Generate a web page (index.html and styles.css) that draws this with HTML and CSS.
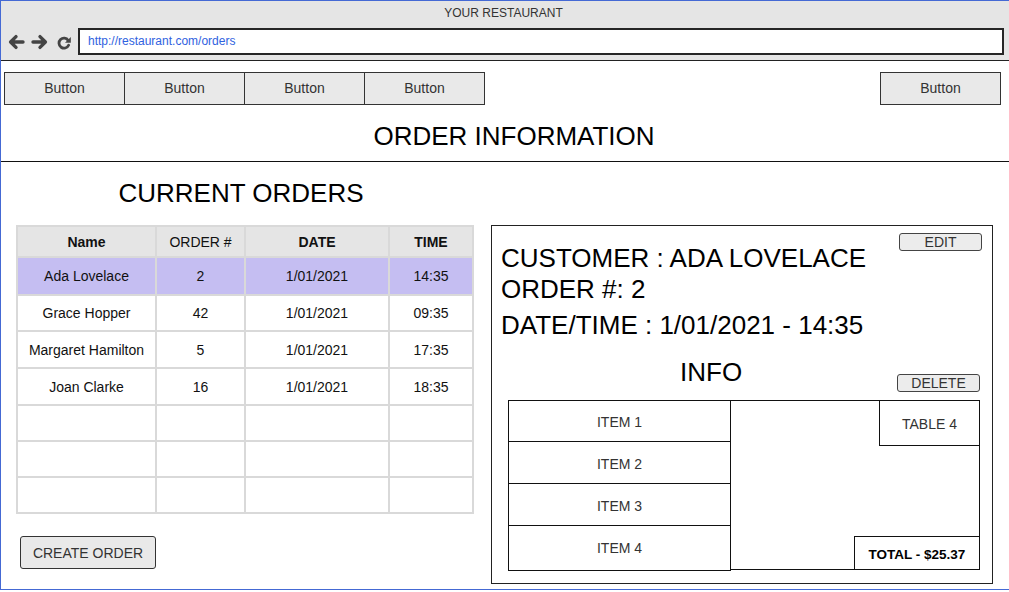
FILE: index.html
```html
<!DOCTYPE html>
<html lang="en">
<head>
<meta charset="utf-8">
<title>Order Information</title>
<link rel="stylesheet" href="styles.css">
</head>
<body>
<div class="window">
  <header class="chrome">
    <div class="chrome-title">YOUR RESTAURANT</div>
    <div class="chrome-bar">
      <div class="nav-icons">
        <svg class="icon" viewBox="0 0 18 16" aria-hidden="true">
          <path d="M16 8H4M9 2.6L3.6 8L9 13.4" fill="none" stroke="#444" stroke-width="3.4" stroke-linecap="round" stroke-linejoin="round"/>
        </svg>
        <svg class="icon" viewBox="0 0 18 16" aria-hidden="true">
          <path d="M2 8H14M9 2.6L14.4 8L9 13.4" fill="none" stroke="#444" stroke-width="3.4" stroke-linecap="round" stroke-linejoin="round"/>
        </svg>
        <svg class="icon" viewBox="0 0 18 16" aria-hidden="true">
          <path d="M13.2 6.4A5 5 0 1 0 13.6 11.2" fill="none" stroke="#444" stroke-width="2.8" stroke-linecap="round"/>
          <path d="M15.8 3V8.8H10Z" fill="#444"/>
        </svg>
      </div>
      <div class="url">http://restaurant.com/orders</div>
    </div>
  </header>

  <nav class="menu">
    <div class="menu-group">
      <button class="menu-btn">Button</button>
      <button class="menu-btn">Button</button>
      <button class="menu-btn">Button</button>
      <button class="menu-btn">Button</button>
    </div>
    <button class="menu-btn">Button</button>
  </nav>

  <h1 class="page-title">ORDER INFORMATION</h1>

  <main class="content">
    <section class="orders">
      <h2 class="orders-title">CURRENT ORDERS</h2>
      <table class="orders-table">
        <colgroup>
          <col class="c-name"><col class="c-num"><col class="c-date"><col class="c-time">
        </colgroup>
        <thead>
          <tr>
            <th class="bold">Name</th>
            <th>ORDER #</th>
            <th class="bold">DATE</th>
            <th class="bold">TIME</th>
          </tr>
        </thead>
        <tbody>
          <tr class="selected r38"><td>Ada Lovelace</td><td>2</td><td>1/01/2021</td><td>14:35</td></tr>
          <tr class="r36"><td>Grace Hopper</td><td>42</td><td>1/01/2021</td><td>09:35</td></tr>
          <tr class="r37"><td>Margaret Hamilton</td><td>5</td><td>1/01/2021</td><td>17:35</td></tr>
          <tr class="r37"><td>Joan Clarke</td><td>16</td><td>1/01/2021</td><td>18:35</td></tr>
          <tr class="r36"><td></td><td></td><td></td><td></td></tr>
          <tr class="r36"><td></td><td></td><td></td><td></td></tr>
          <tr class="r36"><td></td><td></td><td></td><td></td></tr>
        </tbody>
      </table>
      <button class="create-btn">CREATE ORDER</button>
    </section>

    <section class="detail">
      <div class="detail-head">
        <div class="detail-text">
          <p class="cust">CUSTOMER : ADA LOVELACE<br>ORDER #: 2</p>
          <p class="datetime">DATE/TIME : 1/01/2021 - 14:35</p>
        </div>
        <button class="small-btn edit-btn">EDIT</button>
      </div>
      <div class="info-row">
        <h3 class="info-title">INFO</h3>
        <button class="small-btn delete-btn">DELETE</button>
      </div>
      <div class="order-box">
        <div class="items">
          <div class="item i1">ITEM 1</div>
          <div class="item i2">ITEM 2</div>
          <div class="item i3">ITEM 3</div>
          <div class="item i4">ITEM 4</div>
        </div>
        <div class="summary">
          <div class="table-no">TABLE 4</div>
          <div class="total">TOTAL - $25.37</div>
        </div>
      </div>
    </section>
  </main>
</div>
</body>
</html>
```

FILE: styles.css
```css
* {
  box-sizing: border-box;
}

html, body {
  margin: 0;
  padding: 0;
  background: #ffffff;
}

body {
  font-family: "Liberation Sans", Arial, sans-serif;
  color: #000;
}

button {
  font-family: "Liberation Sans", Arial, sans-serif;
  cursor: pointer;
}

.window {
  width: 1010px;
  height: 590px;
  border-top: 1px solid #4469d4;
  border-left: 1px solid #4469d4;
  border-bottom: 1px solid #4469d4;
  overflow: hidden;
}

/* Browser chrome */
.chrome {
  height: 60px;
  background: #e5e5e5;
  border-bottom: 1px solid #222;
}

.chrome-title {
  height: 24px;
  line-height: 24px;
  font-size: 12px;
  color: #333;
  text-align: center;
  padding-right: 4px;
}

.chrome-bar {
  display: flex;
  align-items: center;
  margin-top: 3px;
  padding-left: 6px;
  padding-right: 6px;
}

.nav-icons {
  display: flex;
  gap: 6px;
}

.icon {
  width: 18px;
  height: 16px;
  display: block;
}

.url {
  flex: 1;
  margin-left: 5px;
  height: 27px;
  line-height: 23px;
  background: #fff;
  border: 2px solid #262626;
  padding-left: 8px;
  font-size: 12px;
  color: #2f62e0;
}

/* Top menu */
.menu {
  display: flex;
  justify-content: space-between;
  padding: 11px 9px 0 3px;
}

.menu-group {
  display: flex;
}

.menu-btn {
  width: 121px;
  height: 33px;
  padding: 0 0 2px 0;
  border: 1px solid #333;
  background: #e9e9e9;
  font-size: 14px;
  color: #333;
}

.menu-group .menu-btn + .menu-btn {
  margin-left: -1px;
}

.page-title {
  margin: 0;
  padding: 16px 0 10px 17px;
  line-height: 30px;
  font-size: 26px;
  font-weight: normal;
  text-align: center;
  border-bottom: 1px solid #111;
}

/* Main content */
.content {
  display: flex;
  align-items: flex-start;
  padding-left: 15px;
}

.orders {
  width: 458px;
  display: flex;
  flex-direction: column;
  align-items: flex-start;
}

.orders-title {
  align-self: stretch;
  margin: 0;
  padding-top: 16px;
  padding-right: 8px;
  line-height: 30px;
  font-size: 26px;
  font-weight: normal;
  text-align: center;
}

.orders-table {
  margin-top: 17px;
  width: 458px;
  table-layout: fixed;
  border-collapse: separate;
  border-spacing: 0;
  border-top: 2px solid #d9d9d9;
  border-left: 2px solid #d9d9d9;
  font-size: 14px;
}

.c-name { width: 139px; }
.c-num { width: 89px; }
.c-date { width: 144px; }
.c-time { width: 84px; }

.orders-table th,
.orders-table td {
  padding: 0;
  text-align: center;
  vertical-align: middle;
  border-right: 2px solid #d9d9d9;
  border-bottom: 2px solid #d9d9d9;
  color: #111;
}

.orders-table th {
  height: 31px;
  background: #e5e5e5;
  font-weight: normal;
}

.orders-table th.bold {
  font-weight: bold;
}

.orders-table .r38 td { height: 38px; }
.orders-table .r37 td { height: 37px; }
.orders-table .r36 td { height: 36px; }

.orders-table .selected td {
  background: #c5bef2;
}

.create-btn {
  margin-top: 22px;
  margin-left: 4px;
  width: 136px;
  height: 33px;
  padding: 0;
  border: 1px solid #333;
  border-radius: 3px;
  background: #e9e9e9;
  font-size: 14px;
  color: #333;
}

/* Detail panel */
.detail {
  margin-top: 63px;
  margin-left: 17px;
  width: 502px;
  height: 359px;
  border: 1px solid #222;
}

.detail-head {
  display: flex;
  justify-content: space-between;
  align-items: flex-start;
  padding-left: 9px;
  padding-right: 10px;
}

.detail-text p {
  margin: 0;
  font-size: 26px;
  line-height: 31px;
}

.cust {
  padding-top: 17px;
}

.detail-text .datetime {
  margin-top: 5px;
}

.small-btn {
  width: 83px;
  height: 18px;
  padding: 0;
  border: 1px solid #444;
  border-radius: 3px;
  background: #ececec;
  font-size: 14px;
  line-height: 16px;
  color: #333;
}

.edit-btn {
  margin-top: 7px;
}

.info-row {
  display: flex;
  align-items: flex-start;
  margin-top: 16px;
  padding-left: 188px;
  padding-right: 12px;
}

.info-title {
  margin: 0;
  font-size: 26px;
  line-height: 31px;
  font-weight: normal;
}

.delete-btn {
  margin-left: auto;
  margin-top: 17px;
}

.order-box {
  display: flex;
  align-items: flex-start;
  margin-top: 8px;
  margin-left: 16px;
  width: 472px;
}

.items {
  width: 223px;
  display: flex;
  flex-direction: column;
}

.item {
  border: 1px solid #111;
  display: flex;
  align-items: center;
  justify-content: center;
  font-size: 14px;
  color: #333;
  padding-top: 2px;
}

.item + .item {
  margin-top: -1px;
}

.i1 { height: 42px; }
.i2 { height: 43px; }
.i3 { height: 43px; }
.i4 { height: 46px; padding-top: 0; }

.summary {
  flex: 1;
  margin-left: -1px;
  height: 170px;
  border: 1px solid #111;
  display: flex;
  flex-direction: column;
  justify-content: space-between;
  align-items: flex-end;
}

.table-no {
  width: 100px;
  height: 45px;
  border-left: 1px solid #111;
  border-bottom: 1px solid #111;
  display: flex;
  align-items: center;
  justify-content: center;
  font-size: 14px;
  color: #333;
  padding-top: 2px;
}

.total {
  width: 125px;
  height: 33px;
  border-left: 1px solid #111;
  border-top: 1px solid #111;
  display: flex;
  align-items: center;
  justify-content: center;
  font-size: 13.5px;
  font-weight: bold;
  color: #000;
  padding-top: 2px;
}
```
